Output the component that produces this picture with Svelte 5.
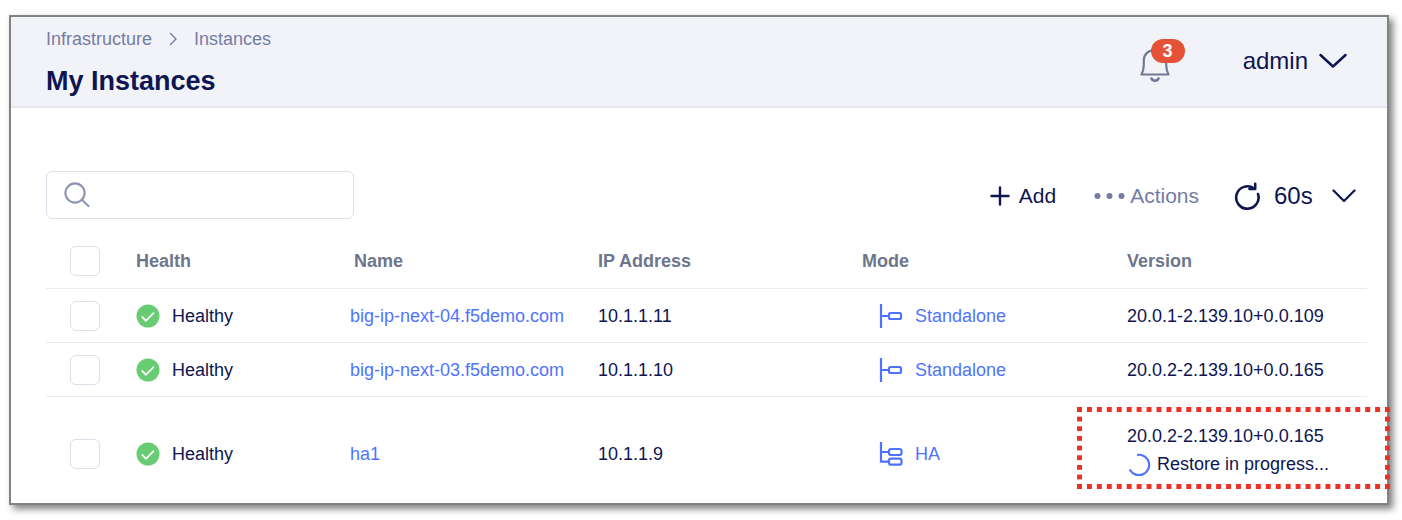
<script>
  let query = $state('');
  let interval = $state('60s');

  let instances = $state([
    { name: 'big-ip-next-04.f5demo.com', ip: '10.1.1.11', mode: 'Standalone', version: '20.0.1-2.139.10+0.0.109', task: '', selected: false },
    { name: 'big-ip-next-03.f5demo.com', ip: '10.1.1.10', mode: 'Standalone', version: '20.0.2-2.139.10+0.0.165', task: '', selected: false },
    { name: 'ha1', ip: '10.1.1.9', mode: 'HA', version: '20.0.2-2.139.10+0.0.165', task: 'Restore in progress...', selected: false }
  ]);

  let allSelected = $derived(instances.every((i) => i.selected));

  function toggleAll(event) {
    for (const i of instances) i.selected = event.currentTarget.checked;
  }
</script>

<main class="window">
  <header class="top">
    <div class="heading">
      <nav class="crumbs" aria-label="Breadcrumb">
        <a href="#infrastructure">Infrastructure</a>
        <svg width="10" height="14" viewBox="0 0 10 14" aria-hidden="true">
          <path d="M2 1l6 6-6 6" fill="none" stroke="currentColor" stroke-width="1.4" />
        </svg>
        <a href="#instances">Instances</a>
      </nav>
      <h1>My Instances</h1>
    </div>
    <div class="account">
      <button class="bell" aria-label="Notifications">
        <svg width="30" height="34" viewBox="0 0 30 34" aria-hidden="true">
          <g fill="none" stroke="currentColor" stroke-width="2.200" stroke-linecap="round" stroke-linejoin="round">
            <path d="M1.500 26.500H28.500C27 24 26.200 21 26.200 16.500V12.500C26.200 6 21.500 2 15 2S3.800 6 3.800 12.500V16.500C3.800 21 3 24 1.500 26.500Z" />
            <path d="M11.500 30.500C12.500 33.500 17.500 33.500 18.500 30.500" stroke-width="2.600" />
          </g>
        </svg>
        <span class="badge">3</span>
      </button>
      <button class="user">
        admin
        <svg width="28" height="16" viewBox="0 0 28 16" aria-hidden="true">
          <path d="M1.500 2L14 13.500 26.500 2" fill="none" stroke="currentColor" stroke-width="2.500" stroke-linecap="round" stroke-linejoin="round" />
        </svg>
      </button>
    </div>
  </header>

  <section class="content">
    <div class="toolbar">
      <label class="search">
        <svg width="26" height="26" viewBox="0 0 26 26" aria-hidden="true">
          <g fill="none" stroke="currentColor" stroke-width="2.100" stroke-linecap="round">
            <circle cx="11" cy="11" r="9.600" />
            <path d="M18 18l6.500 6" />
          </g>
        </svg>
        <input type="search" aria-label="Search instances" bind:value={query} />
      </label>
      <div class="actions">
        <button class="add">
          <svg width="20" height="20" viewBox="0 0 20 20" aria-hidden="true">
            <path d="M10 1.500v17M1.500 10h17" stroke="currentColor" stroke-width="2.400" stroke-linecap="round" />
          </svg>
          Add
        </button>
        <button class="more">
          <svg width="31" height="8" viewBox="0 0 31 8" aria-hidden="true">
            <g fill="currentColor">
              <circle cx="3.500" cy="4" r="3" />
              <circle cx="15.500" cy="4" r="3" />
              <circle cx="27.500" cy="4" r="3" />
            </g>
          </svg>
          Actions
        </button>
        <div class="refresh">
          <button aria-label="Refresh">
            <svg width="26" height="28" viewBox="0 0 26 28" aria-hidden="true">
              <g fill="none" stroke="currentColor" stroke-width="2.600" stroke-linecap="round" stroke-linejoin="round">
                <path d="M24 12A11.200 11.200 0 1 1 20 6.500" />
                <path d="M21.200 1.800V7H15.500" />
              </g>
            </svg>
          </button>
          <label class="interval">
            <select aria-label="Refresh interval" bind:value={interval}>
              <option>60s</option>
              <option>30s</option>
            </select>
            <svg width="24" height="14" viewBox="0 0 24 14" aria-hidden="true">
              <path d="M1.500 1.500L12 12 22.500 1.500" fill="none" stroke="currentColor" stroke-width="2.200" stroke-linecap="round" stroke-linejoin="round" />
            </svg>
          </label>
        </div>
      </div>
    </div>

    <table>
      <thead>
        <tr>
          <th class="pick"><input type="checkbox" aria-label="Select all instances" checked={allSelected} onchange={toggleAll} /></th>
          <th class="health">Health</th>
          <th class="name">Name</th>
          <th class="ip">IP Address</th>
          <th class="mode">Mode</th>
          <th>Version</th>
        </tr>
      </thead>
      <tbody>
        {#each instances as item (item.name)}
          <tr class:busy={item.task}>
            <td class="pick"><input type="checkbox" aria-label={`Select ${item.name}`} bind:checked={item.selected} /></td>
            <td>
              <span class="status">
                <svg width="24" height="24" viewBox="0 0 24 24" aria-hidden="true">
                  <circle cx="12" cy="12" r="11.500" fill="#68cc73" />
                  <path d="M6.200 12.800l3.700 4 7.600-7.600" fill="none" stroke="#fff" stroke-width="1.700" stroke-linecap="round" stroke-linejoin="round" />
                </svg>
                Healthy
              </span>
            </td>
            <td><a href={`#${item.name}`}>{item.name}</a></td>
            <td>{item.ip}</td>
            <td>
              <a class="kind" href={`#${item.name}-mode`}>
                <svg width="24" height="24" viewBox="0 0 24 24" aria-hidden="true">
                  <g fill="none" stroke="currentColor" stroke-width="2.200">
                    {#if item.mode === 'HA'}
                      <path d="M2 0V19.700H10M2 10H10" />
                      <rect x="10" y="7" width="12.500" height="6" rx="2" />
                      <rect x="10" y="16.700" width="12.500" height="6" rx="2" />
                    {:else}
                      <path d="M2 0V24M2 12H10" />
                      <rect x="10" y="9" width="12" height="6" rx="1.500" />
                    {/if}
                  </g>
                </svg>
                {item.mode}
              </a>
            </td>
            <td class="version">
              {item.version}
              {#if item.task}
                <div class="task">
                  <svg width="24" height="24" viewBox="0 0 24 24" aria-hidden="true">
                    <path d="M11 2.800A10.200 10.200 0 1 1 3.200 18.200" fill="none" stroke="#4f73ff" stroke-width="2.200" stroke-linecap="round" />
                  </svg>
                  {item.task}
                </div>
                <div class="callout"></div>
              {/if}
            </td>
          </tr>
        {/each}
      </tbody>
    </table>
  </section>
</main>

<style>
  :global(body) {
    background: #fff;
  }

  .window {
    margin: 15px 13px 15px 9px;
    border: 2px solid #808480;
    background: #fff;
    box-shadow: 4px 4px 7px rgba(0, 0, 0, 0.5);
    color: #0e1551;
    font: 18px/24px 'Liberation Sans', Arial, sans-serif;
  }

  button,
  select,
  input {
    margin: 0;
    padding: 0;
    border: 0;
    background: none;
    color: inherit;
    font: inherit;
  }

  svg {
    flex: none;
  }

  a {
    color: #4f73ff;
    text-decoration: none;
  }

  .top {
    display: flex;
    justify-content: space-between;
    padding: 10px 40px 9px 35px;
    border-bottom: 2px solid #e4e6f0;
    background: #f2f3f9;
  }

  .crumbs {
    display: flex;
    align-items: center;
    gap: 16px;
    color: #757ca3;
  }

  .crumbs a {
    color: inherit;
  }

  h1 {
    margin: 14px 0 0;
    font-size: 27px;
    line-height: 32px;
    font-weight: 700;
  }

  .account {
    display: flex;
    align-items: center;
    gap: 73px;
    padding-bottom: 3px;
  }

  .bell {
    display: flex;
    position: relative;
    margin-top: 8px;
    color: #6f7a92;
  }

  .badge {
    position: absolute;
    top: -9px;
    left: 11px;
    width: 34px;
    border-radius: 12px;
    background: #e65237;
    color: #fff;
    font-weight: 700;
    text-align: center;
  }

  .user {
    display: flex;
    align-items: center;
    gap: 11px;
    font-size: 24px;
  }

  .content {
    padding: 63px 20px 0 35px;
  }

  .toolbar {
    display: flex;
    align-items: center;
    justify-content: space-between;
    padding-right: 11px;
  }

  .search {
    display: flex;
    align-items: center;
    gap: 12px;
    box-sizing: border-box;
    width: 308px;
    height: 48px;
    padding: 0 17px;
    border: 1px solid #dcdde8;
    border-radius: 6px;
    color: #8e93b3;
  }

  .search input {
    flex: 1;
    min-width: 0;
    color: #0e1551;
    outline: none;
    appearance: none;
  }

  .actions,
  .add,
  .more,
  .refresh,
  .interval {
    display: flex;
    align-items: center;
  }

  .actions {
    padding-top: 2px;
    font-size: 21px;
  }

  .add {
    gap: 9px;
    margin-right: 38px;
  }

  .more {
    gap: 5px;
    margin-right: 35px;
    color: #757ca3;
  }

  .refresh {
    gap: 14px;
    font-size: 24px;
  }

  .refresh button {
    display: flex;
  }

  .interval {
    gap: 19px;
  }

  select {
    appearance: none;
    line-height: 30px;
  }

  table {
    width: 100%;
    margin-top: 14px;
    border-collapse: separate;
    border-spacing: 0;
    table-layout: fixed;
  }

  th,
  td {
    height: 53px;
    padding: 0;
    border-bottom: 1px solid #e9eaee;
    text-align: left;
    vertical-align: middle;
    white-space: nowrap;
  }

  th {
    height: 55px;
    color: #6c768c;
  }

  .pick {
    width: 90px;
  }

  .health {
    width: 214px;
  }

  .name {
    width: 244px;
    padding-left: 4px;
  }

  .ip {
    width: 264px;
  }

  .mode {
    width: 265px;
  }

  input[type='checkbox'] {
    display: block;
    appearance: none;
    box-sizing: border-box;
    width: 30px;
    height: 30px;
    margin-left: 24px;
    border: 1px solid #dcdde8;
    border-radius: 6px;
  }

  input[type='checkbox']:checked {
    background: #4f73ff;
  }

  .status,
  .kind {
    display: flex;
    align-items: center;
    gap: 12px;
  }

  .kind {
    padding-left: 17px;
  }

  .busy td {
    height: 99px;
    padding-top: 7px;
    border-bottom: 0;
  }

  .busy .version {
    position: relative;
    height: 106px;
    padding-top: 0;
    line-height: 28px;
  }

  .task {
    display: flex;
    align-items: center;
    gap: 6px;
  }

  /* Dotted highlight; each strip overshoots by one gap so a square ends on every corner. */
  .callout {
    position: absolute;
    inset: 10px -23px 14px -50px;
    pointer-events: none;
  }

  .callout::before,
  .callout::after {
    content: '';
    position: absolute;
  }

  .callout::before {
    inset: 0 -5px 0 0;
    background:
      linear-gradient(90deg, #ee3124 50%, transparent 50%) left top / 10px 5px,
      linear-gradient(90deg, #ee3124 50%, transparent 50%) left bottom / 10px 5px;
    background-repeat: round no-repeat;
  }

  .callout::after {
    inset: 0 0 -5px 0;
    background:
      linear-gradient(#ee3124 50%, transparent 50%) left top / 5px 10px,
      linear-gradient(#ee3124 50%, transparent 50%) right top / 5px 10px;
    background-repeat: no-repeat round;
  }
</style>
